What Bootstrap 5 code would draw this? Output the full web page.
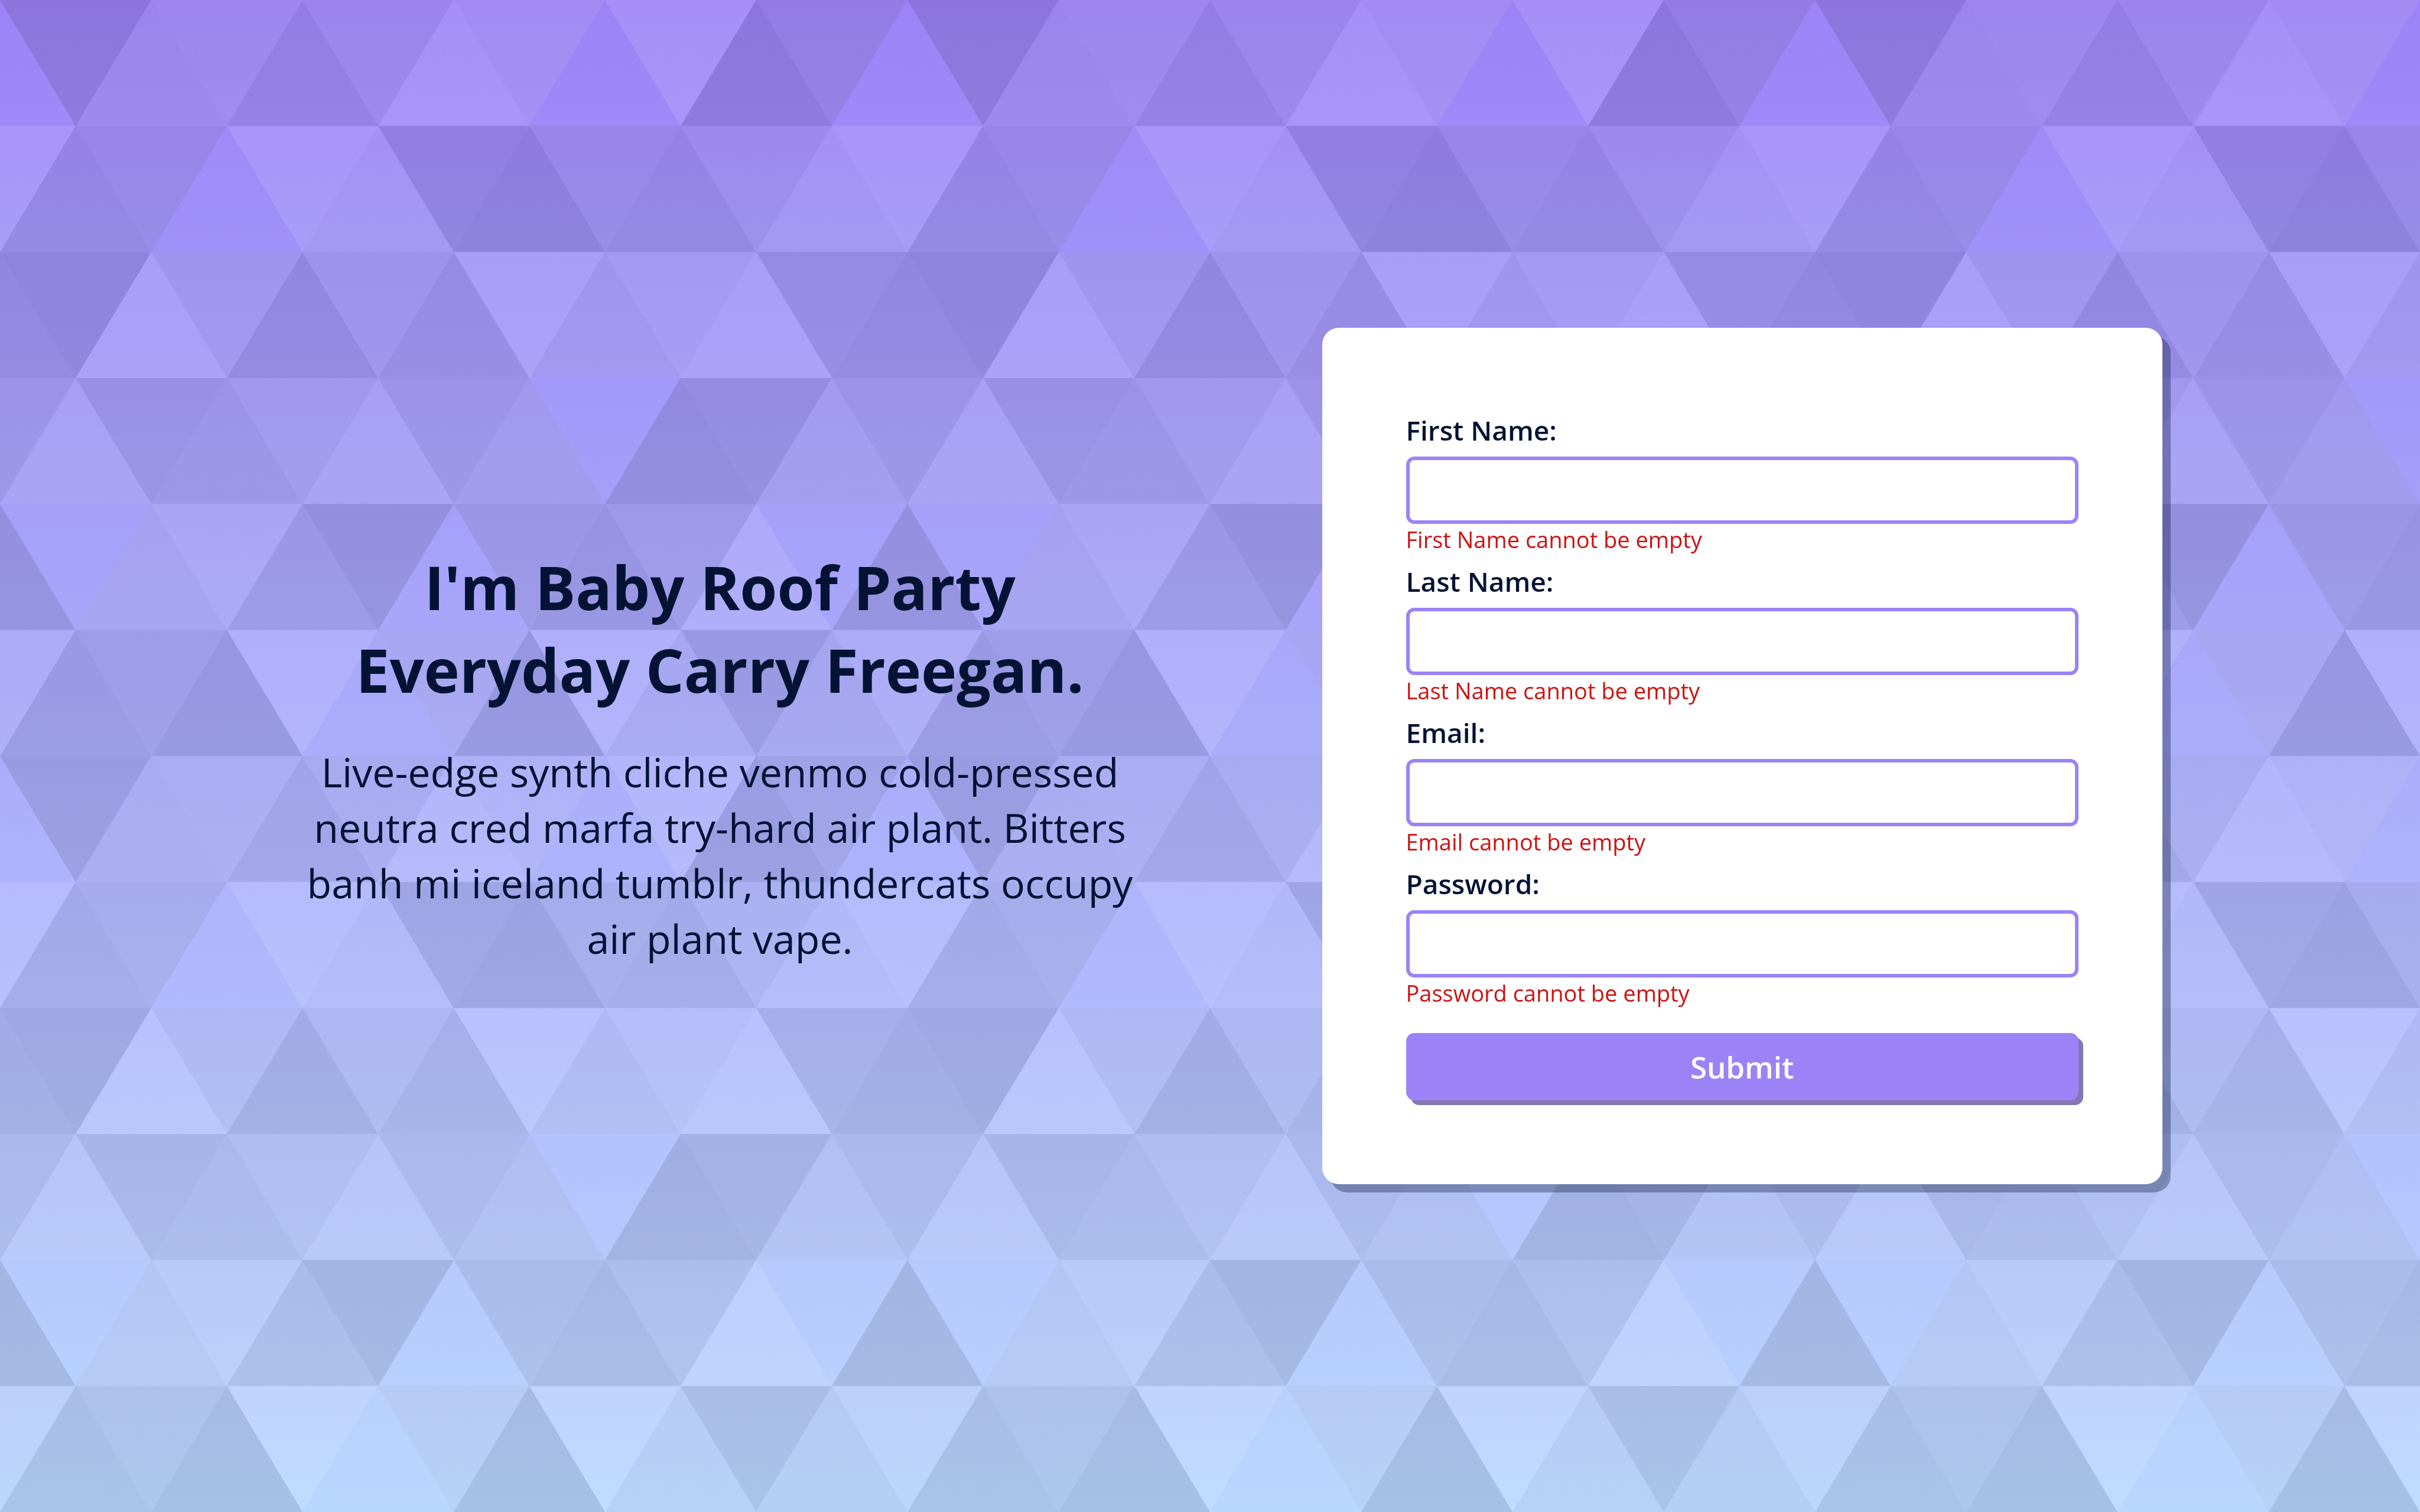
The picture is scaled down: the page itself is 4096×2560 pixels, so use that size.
<!DOCTYPE html>
<html lang="en">
<head>
<meta charset="utf-8">
<meta name="viewport" content="width=device-width, initial-scale=1">
<title>Sign up</title>
<link href="https://cdn.jsdelivr.net/npm/bootstrap@5.3.0/dist/css/bootstrap.min.css" rel="stylesheet">
<style>
  body {
    color: #041333;
    font-family: "Open Sans", sans-serif;
    background: linear-gradient(#9b83f7, #bad7ff);
  }
  .backdrop { z-index: -1; }
  .layout { gap: 308px; padding-left: 71px; }
  .intro, .signup { width: 1422px; }
  .intro { font-size: 68px; line-height: 94px; }
  .intro h1 { font-size: 102px; line-height: 140px; font-weight: 700; margin-bottom: 56px; }
  .signup {
    padding: 142px;
    border-radius: 28px;
    box-shadow: 14px 14px 0 rgba(4, 19, 51, .33);
  }
  .signup label { font-size: 46px; line-height: 62px; font-weight: 600; margin-bottom: 14px; }
  .signup .form-control {
    height: 114px;
    padding: 0 28px;
    font-size: 46px;
    border: 6px solid #9b83f7;
    border-radius: 14px;
  }
  .signup .invalid-feedback { font-size: 38px; line-height: 52px; margin: 0 0 14px; color: #cf1111; }
  .signup .btn {
    height: 114px;
    margin-top: 28px;
    font-size: 51px;
    font-weight: 600;
    color: #fff;
    background: #9b83f7;
    border: 0;
    border-radius: 14px;
    box-shadow: 8px 8px 0 #8577b0;
  }
</style>
<script src="https://cdn.jsdelivr.net/npm/bootstrap@5.3.0/dist/js/bootstrap.bundle.min.js"></script>
</head>
<body>
<svg class="backdrop position-fixed top-0 start-0 w-100 h-100" aria-hidden="true">
  <defs>
    <pattern id="prisms" width="1536" height="1280" viewBox="0 0 1080 900" patternUnits="userSpaceOnUse">
      <g fill-opacity=".1">
        <polygon fill="#444" points="90 150 0 300 180 300"/><polygon points="90 150 180 0 0 0"/><polygon fill="#AAA" points="270 150 360 0 180 0"/><polygon fill="#DDD" points="450 150 360 300 540 300"/><polygon fill="#999" points="450 150 540 0 360 0"/><polygon points="630 150 540 300 720 300"/><polygon fill="#DDD" points="630 150 720 0 540 0"/><polygon fill="#444" points="810 150 720 300 900 300"/><polygon fill="#FFF" points="810 150 900 0 720 0"/><polygon fill="#DDD" points="990 150 900 300 1080 300"/><polygon fill="#444" points="990 150 1080 0 900 0"/>
        <polygon fill="#DDD" points="90 450 0 600 180 600"/><polygon points="90 450 180 300 0 300"/><polygon fill="#666" points="270 450 180 600 360 600"/><polygon fill="#AAA" points="270 450 360 300 180 300"/><polygon fill="#DDD" points="450 450 360 600 540 600"/><polygon fill="#999" points="450 450 540 300 360 300"/><polygon fill="#999" points="630 450 540 600 720 600"/><polygon fill="#FFF" points="630 450 720 300 540 300"/><polygon points="810 450 720 600 900 600"/><polygon fill="#DDD" points="810 450 900 300 720 300"/><polygon fill="#AAA" points="990 450 900 600 1080 600"/><polygon fill="#444" points="990 450 1080 300 900 300"/>
        <polygon fill="#222" points="90 750 0 900 180 900"/><polygon points="270 750 180 900 360 900"/><polygon fill="#DDD" points="270 750 360 600 180 600"/><polygon points="450 750 540 600 360 600"/><polygon points="630 750 540 900 720 900"/><polygon fill="#444" points="630 750 720 600 540 600"/><polygon fill="#AAA" points="810 750 720 900 900 900"/><polygon fill="#666" points="810 750 900 600 720 600"/><polygon fill="#999" points="990 750 900 900 1080 900"/>
        <polygon fill="#999" points="180 0 90 150 270 150"/><polygon fill="#444" points="360 0 270 150 450 150"/><polygon fill="#FFF" points="540 0 450 150 630 150"/><polygon points="900 0 810 150 990 150"/>
        <polygon fill="#222" points="0 300 -90 450 90 450"/><polygon fill="#FFF" points="0 300 90 150 -90 150"/><polygon fill="#FFF" points="180 300 90 450 270 450"/><polygon fill="#666" points="180 300 270 150 90 150"/><polygon fill="#222" points="360 300 270 450 450 450"/><polygon fill="#FFF" points="360 300 450 150 270 150"/><polygon fill="#444" points="540 300 450 450 630 450"/><polygon fill="#222" points="540 300 630 150 450 150"/><polygon fill="#AAA" points="720 300 630 450 810 450"/><polygon fill="#666" points="720 300 810 150 630 150"/><polygon fill="#FFF" points="900 300 810 450 990 450"/><polygon fill="#999" points="900 300 990 150 810 150"/>
        <polygon points="0 600 -90 750 90 750"/><polygon fill="#666" points="0 600 90 450 -90 450"/><polygon fill="#AAA" points="180 600 90 750 270 750"/><polygon fill="#444" points="180 600 270 450 90 450"/><polygon fill="#444" points="360 600 270 750 450 750"/><polygon fill="#999" points="360 600 450 450 270 450"/><polygon fill="#666" points="540 600 630 450 450 450"/><polygon fill="#222" points="720 600 630 750 810 750"/><polygon fill="#FFF" points="900 600 810 750 990 750"/><polygon fill="#222" points="900 600 990 450 810 450"/>
        <polygon fill="#DDD" points="0 900 90 750 -90 750"/><polygon fill="#444" points="180 900 270 750 90 750"/><polygon fill="#FFF" points="360 900 450 750 270 750"/><polygon fill="#AAA" points="540 900 630 750 450 750"/><polygon fill="#FFF" points="720 900 810 750 630 750"/><polygon fill="#222" points="900 900 990 750 810 750"/>
        <polygon fill="#222" points="1080 300 990 450 1170 450"/><polygon fill="#FFF" points="1080 300 1170 150 990 150"/><polygon points="1080 600 990 750 1170 750"/><polygon fill="#666" points="1080 600 1170 450 990 450"/><polygon fill="#DDD" points="1080 900 1170 750 990 750"/>
      </g>
    </pattern>
  </defs>
  <rect width="100%" height="100%" fill="url(#prisms)"/>
</svg>
<main class="layout d-flex min-vh-100 justify-content-center align-items-center">
  <section class="intro text-center">
    <h1>I'm Baby Roof Party Everyday Carry Freegan.</h1>
    <p class="mb-0">Live-edge synth cliche venmo cold-pressed neutra cred marfa try-hard air plant. Bitters banh mi iceland tumblr, thundercats occupy air plant vape.</p>
  </section>
  <form class="signup bg-white" novalidate>
    <div><label class="d-block" for="firstName">First Name:</label><input class="form-control" type="text" id="firstName" aria-describedby="firstNameError"><div class="invalid-feedback d-block" id="firstNameError">First Name cannot be empty</div></div>
    <div><label class="d-block" for="lastName">Last Name:</label><input class="form-control" type="text" id="lastName" aria-describedby="lastNameError"><div class="invalid-feedback d-block" id="lastNameError">Last Name cannot be empty</div></div>
    <div><label class="d-block" for="email">Email:</label><input class="form-control" type="email" id="email" aria-describedby="emailError"><div class="invalid-feedback d-block" id="emailError">Email cannot be empty</div></div>
    <div><label class="d-block" for="password">Password:</label><input class="form-control" type="password" id="password" aria-describedby="passwordError"><div class="invalid-feedback d-block" id="passwordError">Password cannot be empty</div></div>
    <button class="btn w-100" type="submit">Submit</button>
  </form>
</main>
</body>
</html>
